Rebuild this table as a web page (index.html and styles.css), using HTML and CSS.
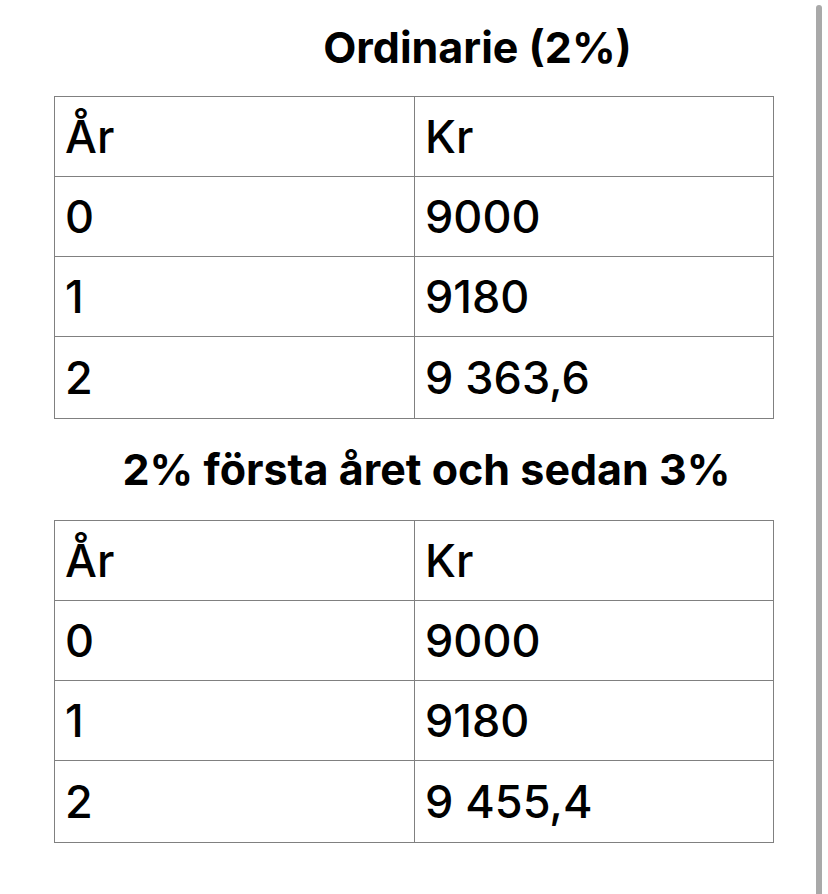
FILE: index.html
```html
<!DOCTYPE html>
<html lang="sv">
<head>
<meta charset="utf-8">
<title>Ränta</title>
<link rel="stylesheet" href="styles.css">
</head>
<body>
<div class="page">
  <h2 class="title title-first">Ordinarie (2%)</h2>
  <table class="grid">
    <tr><td>År</td><td>Kr</td></tr>
    <tr><td>0</td><td>9000</td></tr>
    <tr><td>1</td><td>9180</td></tr>
    <tr class="last"><td>2</td><td>9 363,6</td></tr>
  </table>
  <h2 class="title title-second">2% första året och sedan 3%</h2>
  <table class="grid">
    <tr><td>År</td><td>Kr</td></tr>
    <tr><td>0</td><td>9000</td></tr>
    <tr><td>1</td><td>9180</td></tr>
    <tr class="last"><td>2</td><td>9 455,4</td></tr>
  </table>
</div>
<div class="scrollbar"></div>
</body>
</html>
```
FILE: styles.css
```css
html, body {
  margin: 0;
  padding: 0;
  background: #ffffff;
}
body {
  font-family: Inter, "Noto Sans", sans-serif;
  color: #000;
  overflow: hidden;
}
.page {
  width: 720px;
  padding: 23px 0 0 54px;
}
.title {
  margin: 0;
  font-size: 43px;
  font-weight: 700;
  line-height: 48px;
  text-align: center;
}
.title-first {
  padding-left: 127px;
}
.title-second {
  margin-top: 26px;
  padding-left: 25px;
}
.grid {
  width: 720px;
  border-collapse: collapse;
  margin-top: 25px;
  table-layout: fixed;
}
.title-second + .grid {
  margin-top: 27px;
}
.grid td {
  border: 1px solid #808080;
  padding: 0 0 0 10px;
  font-size: 45px;
  font-weight: 500;
  vertical-align: middle;
  box-sizing: border-box;
  height: 80px;
}
.grid .last td {
  height: 82px;
}
.grid td:first-child {
  width: 360px;
}
.scrollbar {
  position: absolute;
  left: 816px;
  top: 5px;
  width: 6px;
  height: 889px;
  background: #a9a9a9;
  border-radius: 3px 3px 0 0;
}
```
